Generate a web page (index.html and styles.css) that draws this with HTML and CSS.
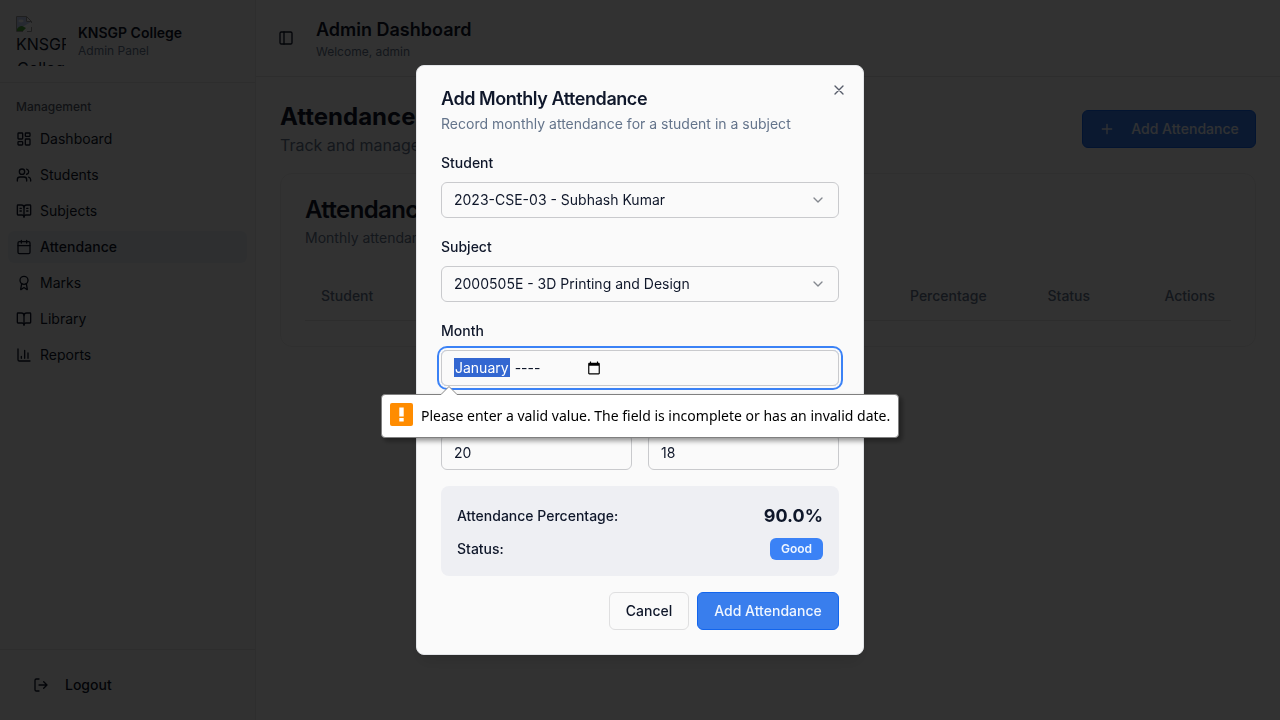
FILE: index.html
```html
<!DOCTYPE html>
<html lang="en">
<head>
<meta charset="utf-8">
<title>Admin Dashboard</title>
<link rel="stylesheet" href="styles.css">
</head>
<body>
<div class="app">
  <aside class="sidebar">
    <div class="brand">
      <div class="logo">
        <svg width="16" height="16" viewBox="0 0 16 16"><path d="M.5.5h10l5 5v10H.5z" fill="#fff"/><path d="M1 1h9v5h5L1 14z" fill="#c1d1f5"/><ellipse cx="5" cy="5" rx="2.6" ry="1.4" fill="#fff"/><path d="M1 15v-2c2-3 5-4 7-2l2 1-3 3z" fill="#4da338"/><path d="M7 16l9-9v3l-6 6z" fill="#fafafa"/><path d="M.5 15.500V.5h10l5 5V7M10.500.5v5h5M.5 15.500H7M11 15.500h4.500V11" fill="none" stroke="#9a9a9a"/></svg>
        <span>KNSGP</span><span class="second">College</span>
      </div>
      <div><div class="brand-name">KNSGP College</div><div class="small">Admin Panel</div></div>
    </div>
    <nav class="nav">
      <div class="nav-label">Management</div>
      <a class="item"><svg class="icon" viewBox="0 0 24 24"><rect width="7" height="9" x="3" y="3" rx="1"/><rect width="7" height="5" x="14" y="3" rx="1"/><rect width="7" height="9" x="14" y="12" rx="1"/><rect width="7" height="5" x="3" y="16" rx="1"/></svg>Dashboard</a>
      <a class="item"><svg class="icon" viewBox="0 0 24 24"><path d="M16 21v-2a4 4 0 0 0-4-4H6a4 4 0 0 0-4 4v2"/><circle cx="9" cy="7" r="4"/><path d="M22 21v-2a4 4 0 0 0-3-3.870M16 3.130a4 4 0 0 1 0 7.750"/></svg>Students</a>
      <a class="item"><svg class="icon" viewBox="0 0 24 24"><path d="M12 7v14M16 12h2M16 8h2M6 12h2M6 8h2"/><path d="M3 18a1 1 0 0 1-1-1V4a1 1 0 0 1 1-1h5a4 4 0 0 1 4 4 4 4 0 0 1 4-4h5a1 1 0 0 1 1 1v13a1 1 0 0 1-1 1h-6a3 3 0 0 0-3 3 3 3 0 0 0-3-3z"/></svg>Subjects</a>
      <a class="item active"><svg class="icon" viewBox="0 0 24 24"><path d="M8 2v4M16 2v4M3 10h18"/><rect width="18" height="18" x="3" y="4" rx="2"/></svg>Attendance</a>
      <a class="item"><svg class="icon" viewBox="0 0 24 24"><path d="m15.477 12.890 1.515 8.526a.5.5 0 0 1-.810.470l-3.580-2.687a1 1 0 0 0-1.197 0l-3.586 2.686a.5.5 0 0 1-.810-.469l1.514-8.526"/><circle cx="12" cy="8" r="6"/></svg>Marks</a>
      <a class="item"><svg class="icon" viewBox="0 0 24 24"><path d="M12 7v14"/><path d="M3 18a1 1 0 0 1-1-1V4a1 1 0 0 1 1-1h5a4 4 0 0 1 4 4 4 4 0 0 1 4-4h5a1 1 0 0 1 1 1v13a1 1 0 0 1-1 1h-6a3 3 0 0 0-3 3 3 3 0 0 0-3-3z"/></svg>Library</a>
      <a class="item"><svg class="icon" viewBox="0 0 24 24"><path d="M3 3v16a2 2 0 0 0 2 2h16M18 17V9M13 17V5M8 17v-3"/></svg>Reports</a>
    </nav>
    <div class="side-foot"><a class="logout"><svg class="icon" viewBox="0 0 24 24"><path d="M9 21H5a2 2 0 0 1-2-2V5a2 2 0 0 1 2-2h4M16 17l5-5-5-5M21 12H9"/></svg>Logout</a></div>
  </aside>
  <div class="content">
    <header class="topbar">
      <svg class="icon" viewBox="0 0 24 24"><rect width="18" height="18" x="3" y="3" rx="2"/><path d="M9 3v18"/></svg>
      <div><h1>Admin Dashboard</h1><div class="small">Welcome, admin</div></div>
    </header>
    <main>
      <div class="page-head">
        <div><h2>Attendance</h2><p>Track and manage</p></div>
        <button class="btn primary with-icon"><svg class="icon" viewBox="0 0 24 24"><path d="M5 12h14M12 5v14"/></svg>Add Attendance</button>
      </div>
      <section class="card">
        <h3>Attendance</h3>
        <p>Monthly attendance</p>
        <div class="thead"><span>Student</span><span>Percentage</span><span>Status</span><span>Actions</span></div>
      </section>
    </main>
  </div>
</div>

<div class="overlay">
  <div class="modal">
    <svg class="icon close" viewBox="0 0 24 24"><path d="M18 6 6 18M6 6l12 12"/></svg>
    <div class="modal-head"><h4>Add Monthly Attendance</h4><p>Record monthly attendance for a student in a subject</p></div>
    <div class="field"><label>Student</label><div class="control">2023-CSE-03 - Subhash Kumar<svg class="icon chev" viewBox="0 0 24 24"><path d="m6 9 6 6 6-6"/></svg></div></div>
    <div class="field"><label>Subject</label><div class="control">2000505E - 3D Printing and Design<svg class="icon chev" viewBox="0 0 24 24"><path d="m6 9 6 6 6-6"/></svg></div></div>
    <div class="field"><label>Month</label>
      <div class="control focused">
        <div class="month"><span><span class="selected">January</span><span class="dashes">----</span></span>
        <svg width="14" height="14" viewBox="0 0 24 24"><path d="M20 3h-1V1h-2v2H7V1H5v2H4c-1.100 0-2 .9-2 2v16c0 1.100.9 2 2 2h16c1.100 0 2-.9 2-2V5c0-1.100-.9-2-2-2zm0 18H4V8h16v13z"/></svg></div>
        <div class="bubble"><svg class="arrow" width="18" height="11" viewBox="0 0 18 11"><path d="M1 9.500 9 1.500l8 8" fill="#fff" stroke="#8a8a8a"/><path d="M1.500 9h15v2h-15z" fill="#fff"/></svg><span class="warn"><svg width="23" height="23" viewBox="0 0 23 23"><path d="M9.300 4.500h4.400v9H9.300zM9.300 15h4.400v3.400H9.300z" fill="#fff"/></svg></span>Please enter a valid value. The field is incomplete or has an invalid date.</div>
      </div>
    </div>
    <div class="pair"><div class="control number">20</div><div class="control number">18</div></div>
    <div class="summary">
      <div class="row"><span>Attendance Percentage:</span><strong>90.0%</strong></div>
      <div class="row"><span>Status:</span><span class="badge">Good</span></div>
    </div>
    <div class="actions"><button class="btn outline">Cancel</button><button class="btn primary submit">Add Attendance</button></div>
  </div>
</div>
</body>
</html>
```
FILE: styles.css
```css
* { box-sizing: border-box; margin: 0; }
body { font: 14px/20px Inter, sans-serif; color: #0f172a; background: #fafafa; height: 720px; overflow: hidden; }
.icon { width: 16px; height: 16px; flex: none; fill: none; stroke: currentColor; stroke-width: 2; stroke-linecap: round; stroke-linejoin: round; }
.app { display: flex; height: 720px; }
.sidebar { flex: none; width: 256px; display: flex; flex-direction: column; border-right: 1px solid #e6e6e6; background: #f6f6f6; }
.brand { display: flex; align-items: center; gap: 12px; height: 83px; padding: 16px; border-bottom: 1px solid #e2e2e2; }
.logo { width: 50px; height: 50px; overflow: hidden; font-size: 16px; line-height: 24px; }
.logo svg, .logo span { display: block; }
.logo .second { padding-left: 1px; }
.brand-name { font-weight: 600; line-height: 20px; }
.small { font-size: 12px; line-height: 16px; color: #64748b; }
.nav { display: flex; flex-direction: column; gap: 4px; padding: 8px; flex: 1; }
.nav-label { height: 32px; padding: 0 8px; line-height: 32px; font-size: 12px; font-weight: 500; color: #575d6a; margin-bottom: -4px; }
.item { display: flex; align-items: center; gap: 8px; height: 32px; padding: 0 8px; border-radius: 6px; }
.item.active { background: #e7ebf0; font-weight: 500; letter-spacing: .05px; }
.side-foot { padding: 16px; border-top: 1px solid #e2e2e2; }
.logout { display: flex; align-items: center; gap: 16px; height: 38px; padding: 0 17px; font-weight: 500; }
.content { flex: 1; min-width: 0; }
.topbar { display: flex; align-items: center; gap: 22px; height: 77px; padding: 0 22px; border-bottom: 1px solid #e2e2e2; }
h1 { font-size: 18px; line-height: 28px; font-weight: 600; }
main { padding: 24px; }
.page-head { display: flex; align-items: center; justify-content: space-between; height: 56px; }
h2 { font-size: 24px; line-height: 32px; font-weight: 700; }
.page-head p { font-size: 16px; line-height: 24px; color: #64748b; }
.btn { display: inline-flex; align-items: center; justify-content: center; height: 38px; padding: 0 16px; border-radius: 6px; font: 500 14px/20px Inter, sans-serif; color: #0f172a; white-space: nowrap; }
.primary { color: #eff6ff; background: #397eed; border: 1px solid #1265ed; }
.with-icon { width: 174px; gap: 16px; }
.submit { width: 142px; }
.outline { width: 80px; background: #fafafa; border: 1px solid #dfdfe0; }
.card { margin-top: 16px; height: 174px; padding: 24px; border: 1px solid #ebebeb; border-radius: 12px; background: #fbfbfb; }
h3 { font-size: 24px; line-height: 24px; font-weight: 600; letter-spacing: -.6px; }
.card p { margin-top: 6px; color: #64748b; }
.thead { display: grid; grid-template-columns: 589px 137.500px minmax(0, 1fr) auto; margin-top: 24px; height: 49px; padding: 0 16px; align-items: center; border-bottom: 1px solid #e2e2e2; font-weight: 500; color: #64748b; }
.overlay { position: fixed; inset: 0; display: flex; align-items: center; justify-content: center; background: rgba(0,0,0,.8); }
.modal { position: relative; display: flex; flex-direction: column; gap: 16px; width: 448px; height: 590px; padding: 24px; background: #fafafa; border: 1px solid #e3e5e8; border-radius: 8px; box-shadow: 0 10px 15px -3px rgba(0,0,0,.1), 0 4px 6px -4px rgba(0,0,0,.1); }
.close { position: absolute; right: 16px; top: 16px; color: #575d6a; }
.modal-head { height: 44px; }
h4 { font-size: 18px; line-height: 18px; font-weight: 600; letter-spacing: -.44px; }
.modal-head p { margin-top: 6px; color: #64748b; letter-spacing: .005px; }
.field { display: flex; flex-direction: column; gap: 8px; }
label { height: 24px; font-weight: 500; line-height: 26px; }
.control { position: relative; display: flex; align-items: center; justify-content: space-between; height: 36px; padding: 0 12px; border: 1px solid #c9cacd; border-radius: 6px; }
.number { padding-top: 2px; }
.chev { color: #84888f; }
.focused { box-shadow: 0 0 0 2px #fafafa, 0 0 0 4px #3b82f6; }
.month { display: flex; align-items: center; justify-content: space-between; width: 147px; }
.selected { background: #3367d1; color: #fff; padding: 1px; }
.dashes { padding-left: 5px; }
.bubble { position: absolute; z-index: 2; left: -61px; top: 43px; width: 518px; height: 44px; padding: 0 8px; display: flex; align-items: center; gap: 8px; background: #fff; border: 1px solid #808080; border-radius: 4px; box-shadow: 3px 3px 5px rgba(0,0,0,.4); color: #000; font: 14px/20px "Noto Sans", sans-serif; letter-spacing: -.005px; white-space: nowrap; }
.arrow { position: absolute; left: 58px; top: -10px; }
.warn { flex: none; width: 23px; height: 23px; margin-top: -3px; border-radius: 2px; background: #ff8c00; }
.warn svg { display: block; }
.pair { display: grid; grid-template-columns: 1fr 1fr; gap: 16px; padding-top: 32px; }
.summary { display: flex; flex-direction: column; gap: 8px; height: 90px; padding: 16px; border-radius: 8px; background: #eeeff3; }
.row { display: flex; align-items: center; justify-content: space-between; font-weight: 500; }
.row strong { font-size: 18px; line-height: 28px; font-weight: 700; }
.badge { padding: 3px 11px; border-radius: 6px; background: #3b82f6; color: #eff6ff; font-size: 12px; line-height: 16px; font-weight: 600; }
.actions { display: flex; justify-content: flex-end; gap: 8px; }
```
